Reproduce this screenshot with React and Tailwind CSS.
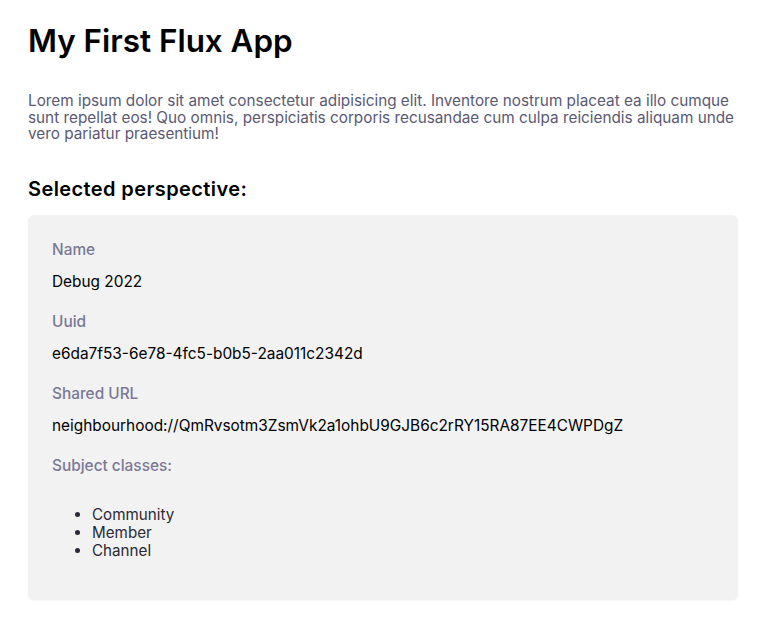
import React from "react";

const perspective = {
  name: "Debug 2022",
  uuid: "e6da7f53-6e78-4fc5-b0b5-2aa011c2342d",
  sharedUrl: "neighbourhood://QmRvsotm3ZsmVk2a1ohbU9GJB6c2rRY15RA87EE4CWPDgZ",
  classes: ["Community", "Member", "Channel"],
};

const Field = ({ label, children }) => (
  <div>
    <div className="text-[15.4px] leading-[20px] font-medium text-[#7b7996]">{label}</div>
    <div className="mt-[12px] text-[15.4px] leading-[20px] text-black">{children}</div>
  </div>
);

const App = () => {
  return (
    <div className="min-h-screen bg-white px-[28px] pt-[22px] pb-6 font-['Inter',sans-serif]">
      <h1 className="text-[31.4px] leading-[38px] font-semibold text-black">My First Flux App</h1>
      <p className="mt-[33px] text-[15.3px] leading-[16.5px] text-[#5a5974]">
        Lorem ipsum dolor sit amet consectetur adipisicing elit. Inventore nostrum placeat ea illo cumque
        sunt repellat eos! Quo omnis, perspiciatis corporis recusandae cum culpa reiciendis aliquam unde
        vero pariatur praesentium!
      </p>
      <h2 className="mt-[34px] text-[20px] leading-[24px] font-semibold tracking-[0.4px] text-black">
        Selected perspective:
      </h2>
      <div className="mt-[14px] rounded-[6px] bg-[#f2f2f2] shadow-[0_1px_2px_rgba(0,0,0,0.04)] px-[24px] pt-[25px] pb-[40px] flex flex-col gap-[20px]">
        <Field label="Name">{perspective.name}</Field>
        <Field label="Uuid">{perspective.uuid}</Field>
        <Field label="Shared URL">{perspective.sharedUrl}</Field>
        <div>
          <div className="text-[15.4px] leading-[20px] font-medium text-[#7b7996]">Subject classes:</div>
          <ul className="mt-[30px] list-disc pl-[40px] text-[15.2px] leading-[18px] text-[#2a2a36]">
            {perspective.classes.map((c) => (
              <li key={c}>{c}</li>
            ))}
          </ul>
        </div>
      </div>
    </div>
  );
};

export default App;
